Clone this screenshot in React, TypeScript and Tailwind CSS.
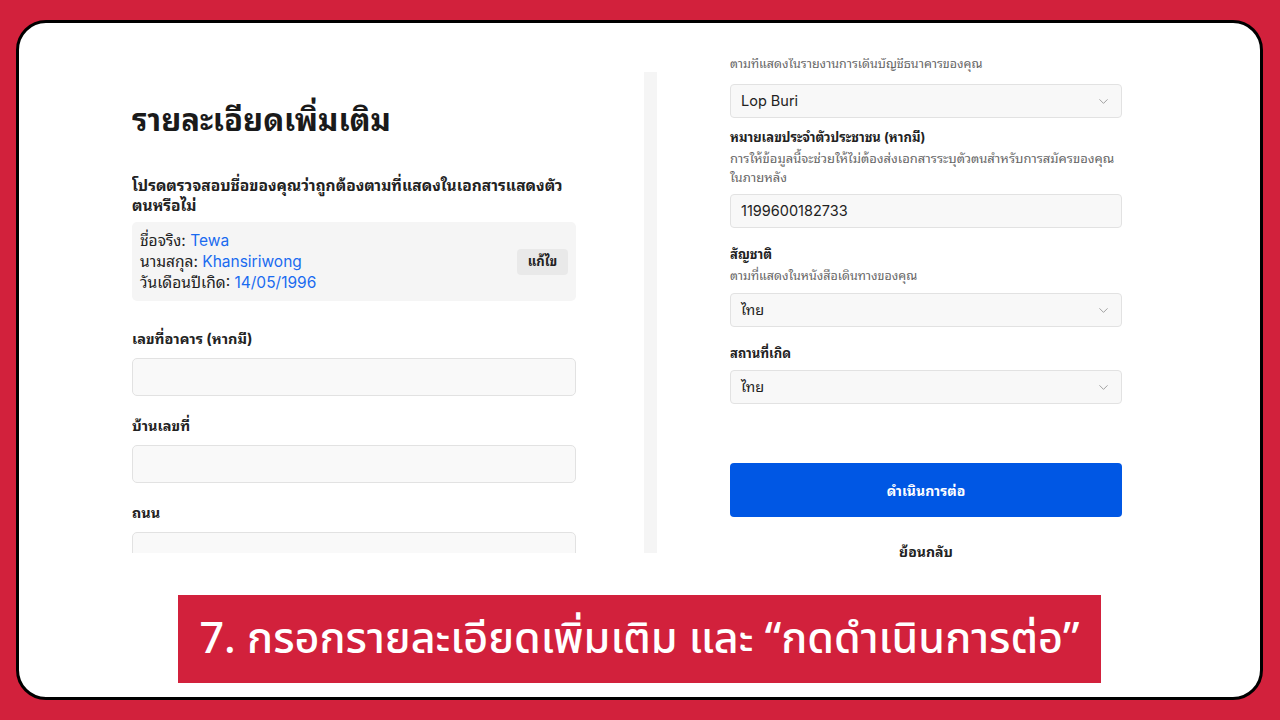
import { ChevronDown } from "lucide-react"

const FONT = "font-['Inter','Noto_Sans_Thai_Looped','Noto_Sans','Noto_Sans_Thai',sans-serif]"

function Select({ value }: { value: string }) {
  return (
    <div className="flex items-center justify-between h-[34px] rounded-[4px] border border-[#e2e2e2] bg-[#f8f8f8] pl-[10px] pr-[10px]">
      <span className="text-[14.5px] text-[#222]">{value}</span>
      <ChevronDown className="w-[15px] h-[15px] text-[#888]" strokeWidth={1.25} />
    </div>
  )
}

function Field({ label }: { label: string }) {
  return (
    <div className="mt-[20px]">
      <p className="text-[14.5px] leading-[20px] font-bold text-[#222]">{label}</p>
      <div className="mt-[9px] h-[38px] rounded-[5px] border border-[#e2e2e2] bg-[#f9f9f9]" />
    </div>
  )
}

export default function App() {
  return (
    <div className={`w-[1280px] h-[720px] bg-[#d2213c] pt-[20px] pb-[20px] pl-[16px] pr-[17px] ${FONT}`}>
      <div className="h-full rounded-[30px] border-[3px] border-black bg-white overflow-hidden flex flex-col">
        {/* screenshots */}
        <div className="flex items-start pl-[113px]">
          {/* left shot */}
          <div className="mt-[49px] h-[481px] flex overflow-hidden">
            <div className="w-[444px]">
              <h1 className="mt-[28px] text-[31px] leading-[40px] font-bold text-[#1a1a1a]">
                รายละเอียดเพิ่มเติม
              </h1>
              <p className="mt-[36px] text-[15.5px] leading-[20px] font-bold text-[#222]">
                โปรดตรวจสอบชื่อของคุณว่าถูกต้องตามที่แสดงในเอกสารแสดงตัว
                <br />
                ตนหรือไม่
              </p>
              <div className="mt-[6px] rounded-[5px] bg-[#f5f5f5] px-[8px] py-[8px] flex items-center justify-between">
                <div className="text-[15.5px] leading-[21px] text-[#222]">
                  <p>
                    ชื่อจริง: <span className="text-[#1a6bf0]">Tewa</span>
                  </p>
                  <p>
                    นามสกุล: <span className="text-[#1a6bf0]">Khansiriwong</span>
                  </p>
                  <p>
                    วันเดือนปีเกิด: <span className="text-[#1a6bf0]">14/05/1996</span>
                  </p>
                </div>
                <button className="w-[51px] h-[26px] rounded-[4px] bg-[#e9e9e9] text-[13px] font-bold text-[#222]">
                  แก้ไข
                </button>
              </div>
              <div className="pt-[8px]">
                <Field label="เลขที่อาคาร (หากมี)" />
                <Field label="บ้านเลขที่" />
                <Field label="ถนน" />
              </div>
            </div>
            <div className="w-[68px]" />
            <div className="w-[13px] h-full bg-[#f5f5f5]" />
          </div>

          {/* right shot */}
          <div className="mt-[35px] h-[504px] overflow-hidden pl-[73px]">
            <div className="w-[392px]">
              <p className="-mt-[3px] text-[12.5px] leading-[18px] text-[#666]">
                ตามที่แสดงในรายงานการเดินบัญชีธนาคารของคุณ
              </p>
              <div className="mt-[11px]">
                <Select value="Lop Buri" />
              </div>
              <p className="mt-[10px] text-[13px] leading-[18px] font-bold text-[#222]">
                หมายเลขประจำตัวประชาชน (หากมี)
              </p>
              <p className="mt-[3px] text-[13px] leading-[19px] text-[#666]">
                การให้ข้อมูลนี้จะช่วยให้ไม่ต้องส่งเอกสารระบุตัวตนสำหรับการสมัครของคุณ
                <br />
                ในภายหลัง
              </p>
              <div className="mt-[7px] flex items-center h-[34px] rounded-[4px] border border-[#e2e2e2] bg-[#f8f8f8] pl-[10px]">
                <span className="text-[14.5px] text-[#222]">1199600182733</span>
              </div>
              <p className="mt-[17px] text-[13px] leading-[18px] font-bold text-[#222]">สัญชาติ</p>
              <p className="mt-[3px] text-[12.5px] leading-[19px] text-[#666]">
                ตามที่แสดงในหนังสือเดินทางของคุณ
              </p>
              <div className="mt-[8px]">
                <Select value="ไทย" />
              </div>
              <p className="mt-[17px] text-[13px] leading-[18px] font-bold text-[#222]">สถานที่เกิด</p>
              <div className="mt-[8px]">
                <Select value="ไทย" />
              </div>
              <button className="mt-[59px] w-full h-[54px] rounded-[4px] bg-[#0057e4] text-white text-[14px] font-bold">
                ดำเนินการต่อ
              </button>
              <p className="mt-[25px] text-center text-[14px] leading-[20px] font-bold text-[#222]">
                ย้อนกลับ
              </p>
            </div>
          </div>
        </div>

        {/* caption */}
        <div className="mt-[33px] mx-auto w-[923px] h-[88px] bg-[#d2213c] flex items-center justify-center">
          <p className="text-white text-[43px] leading-none font-medium font-['Noto_Sans_Thai','Noto_Sans',sans-serif]">
            7. กรอกรายละเอียดเพิ่มเติม และ “กดดำเนินการต่อ”
          </p>
        </div>
      </div>
    </div>
  )
}
